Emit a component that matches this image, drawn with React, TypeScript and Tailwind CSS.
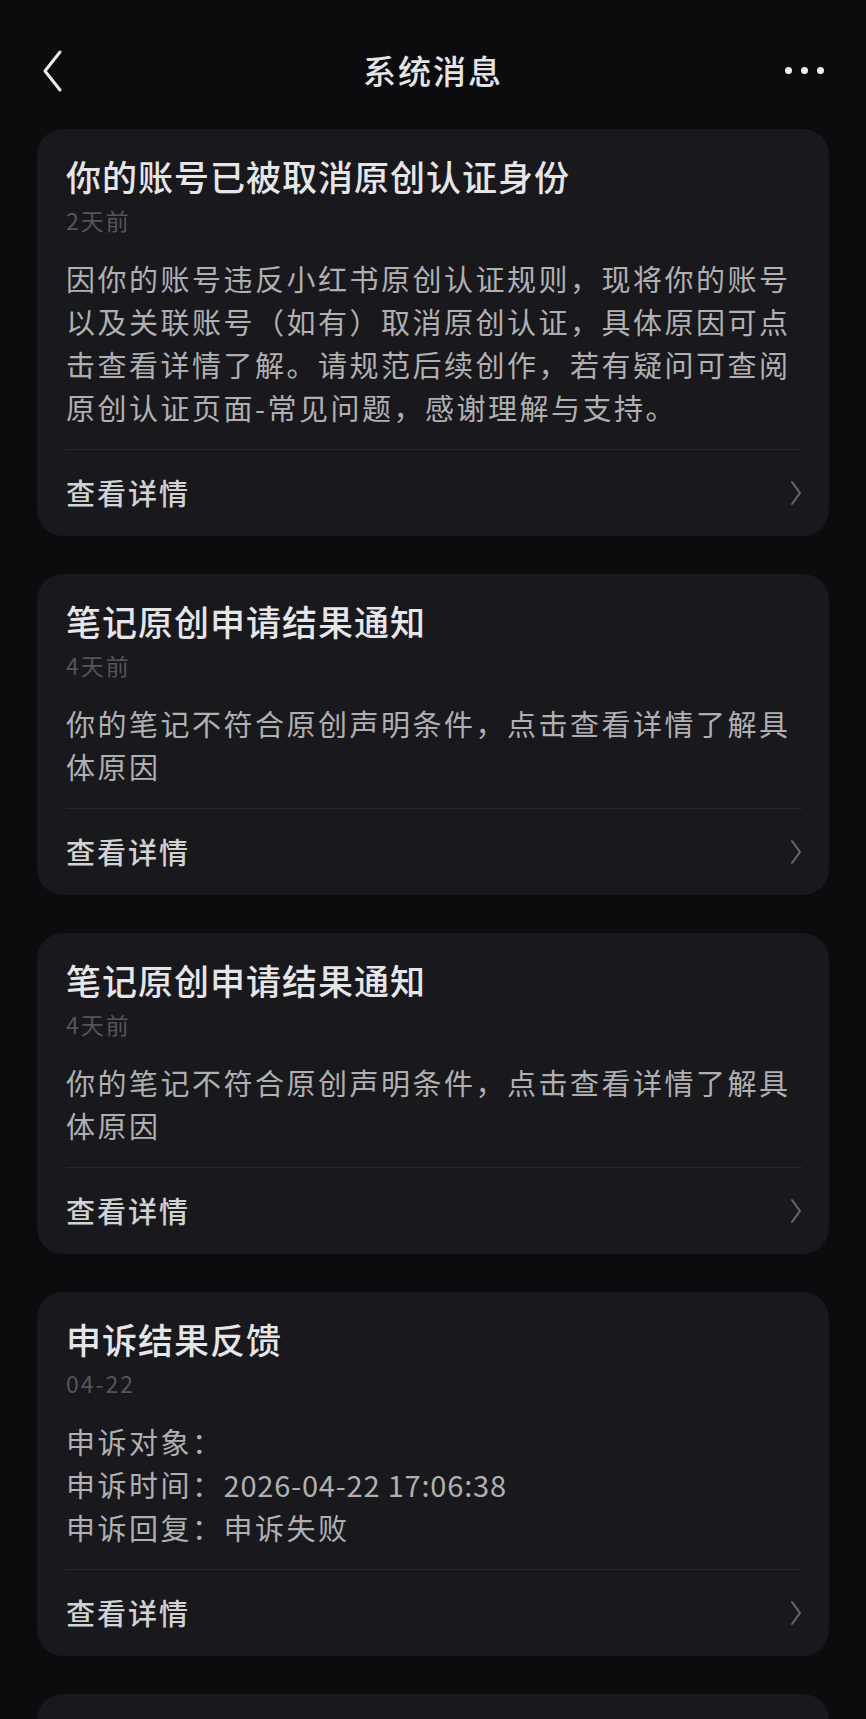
import { ReactNode } from 'react'

type Notice = {
  title: string
  time: string
  body: ReactNode
}

const notices: Notice[] = [
  {
    title: '你的账号已被取消原创认证身份',
    time: '2天前',
    body: '因你的账号违反小红书原创认证规则，现将你的账号以及关联账号（如有）取消原创认证，具体原因可点击查看详情了解。请规范后续创作，若有疑问可查阅原创认证页面-常见问题，感谢理解与支持。',
  },
  {
    title: '笔记原创申请结果通知',
    time: '4天前',
    body: '你的笔记不符合原创声明条件，点击查看详情了解具体原因',
  },
  {
    title: '笔记原创申请结果通知',
    time: '4天前',
    body: '你的笔记不符合原创声明条件，点击查看详情了解具体原因',
  },
  {
    title: '申诉结果反馈',
    time: '04-22',
    body: (
      <>
        <p>申诉对象：</p>
        <p>
          申诉时间：<span className="tracking-[0.8px]">2026-04-22 17:06:38</span>
        </p>
        <p>申诉回复：申诉失败</p>
      </>
    ),
  },
  {
    title: '笔记原创申请结果通知',
    time: '04-20',
    body: '你的笔记不符合原创声明条件，点击查看详情了解具体原因',
  },
]

function NoticeCard({ notice }: { notice: Notice }) {
  return (
    <div className="rounded-[26px] bg-[#19191d]">
      <div className="pl-[29px] pr-[27px] pt-[27px]">
        <h2 className="h-[40px] text-[35px] leading-[40px] font-medium tracking-[1px] text-[#e6e6e8] whitespace-nowrap">
          {notice.title}
        </h2>
        <div className="mt-[9px] h-[30px] text-[23px] leading-[30px] tracking-[2px] text-[#55555a]">
          {notice.time}
        </div>
        <div className="mt-[22px] text-[29px] leading-[43px] tracking-[2.5px] text-[#b0b0b3]">
          {notice.body}
        </div>
      </div>

      <div className="mx-[27px] ml-[29px] mt-[20px] h-px bg-[#27272c]" />

      {/* Footer link */}
      <div className="flex h-[86px] items-center justify-between pl-[29px] pr-[27px]">
        <span className="text-[29px] font-medium tracking-[2px] text-[#d2d2d4]">查看详情</span>
        <svg width="12" height="26" viewBox="0 0 12 26" fill="none">
          <polyline points="2,2 10,13 2,24" stroke="#6a6a6f" strokeWidth={2} strokeLinecap="round" strokeLinejoin="round" />
        </svg>
      </div>
    </div>
  )
}

export default function App() {
  return (
    <div
      className="min-h-screen bg-[#0c0c0f]"
      style={{ fontFamily: '"Noto Sans CJK SC", "Noto Sans", sans-serif' }}
    >
      {/* Top bar */}
      <header className="h-[129px] pt-[46px]">
        <div className="grid h-[46px] grid-cols-[1fr_auto_1fr] items-center">
          <div className="pl-[41px]">
            <svg width="22" height="44" viewBox="0 0 22 44" fill="none">
              <polyline points="19,3 4,22 19,41" stroke="#ececec" strokeWidth={3} strokeLinecap="round" strokeLinejoin="round" />
            </svg>
          </div>
          <h1 className="text-[33px] font-medium tracking-[2px] text-[#e4e4e6]">系统消息</h1>
          <div className="flex justify-end gap-[9px] pr-[42px]">
            <span className="h-[7px] w-[7px] rounded-full bg-[#f0f0f0]" />
            <span className="h-[7px] w-[7px] rounded-full bg-[#f0f0f0]" />
            <span className="h-[7px] w-[7px] rounded-full bg-[#f0f0f0]" />
          </div>
        </div>
      </header>

      <div className="flex flex-col gap-[38px] pl-[37px] pr-[37px] pb-10">
        {notices.map((n, i) => (
          <NoticeCard key={i} notice={n} />
        ))}
      </div>
    </div>
  )
}
